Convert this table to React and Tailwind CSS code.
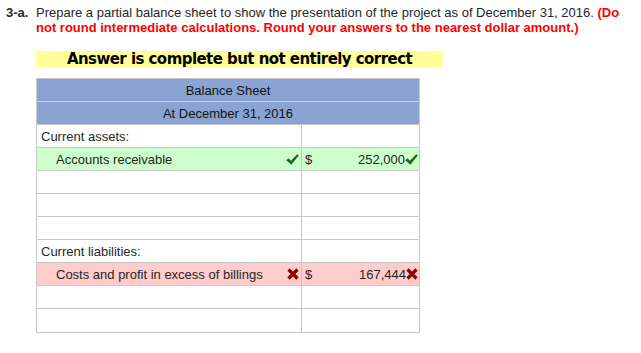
import React from "react";

const Check = () => (
  <svg width="13" height="11" viewBox="0 0 13 11" className="block shrink-0">
    <path d="M0.3 6.2 L2.6 4.2 L4.9 6.8 L11.2 0.2 L12.8 1.6 L5.3 10.8 Z" fill="#1d6b1d" />
  </svg>
);

const Cross = () => (
  <svg width="12" height="12" viewBox="0 0 12 12" className="block shrink-0">
    <path d="M1.5 1.5 L10.5 10.5 M10.5 1.5 L1.5 10.5" stroke="#8e0000" strokeWidth="3.2" strokeLinecap="butt" />
  </svg>
);

function Row({ bg = "", left = null, right = null, last = false }) {
  return (
    <div className={`flex h-[23px] box-border ${last ? "" : "border-b"} border-[#c8c8c8] ${bg}`}>
      <div className="w-[265px] box-border border-r border-[#c8c8c8] flex items-center">{left}</div>
      <div className="flex-1 flex items-center">{right}</div>
    </div>
  );
}

export default function App() {
  return (
    <div className="w-[641px] h-[353px] bg-white overflow-hidden text-[#262626] font-['Liberation_Sans',Arial,sans-serif] text-[13px] leading-[15px]">
      <div className="flex pt-[5px]">
        <div className="w-[36px] pl-[6px] font-bold shrink-0">3-a.</div>
        <p className="w-[590px]">
          Prepare a partial balance sheet to show the presentation of the project as of December 31, 2016.{" "}
          <span className="font-bold text-[#ff0000]">
            (Do not round intermediate calculations. Round your answers to the nearest dollar amount.)
          </span>
        </p>
      </div>

      <div className="ml-[36px] mt-[16px] w-[407px] h-[17px] bg-[#ffff99] text-center text-black font-bold font-['DejaVu_Sans',Verdana,sans-serif] text-[15px] leading-[17px] tracking-[-0.55px]">
        Answer is complete but not entirely correct
      </div>

      <div className="ml-[36px] mt-[10px] w-[384px] border border-[#c8c8c8]">
        <div className="h-[23px] box-border border-b border-[#c9d3e6] bg-[#89a4d3] text-[#111111] flex items-center justify-center">
          Balance Sheet
        </div>
        <div className="h-[23px] box-border border-b border-[#c8c8c8] bg-[#89a4d3] text-[#111111] flex items-center justify-center">
          At December 31, 2016
        </div>
        <Row left={<span className="pl-[4px]">Current assets:</span>} />
        <Row
          bg="bg-[#ccffcc]"
          left={
            <div className="flex items-center w-full pl-[19px] pr-[2px]">
              <span>Accounts receivable</span>
              <span className="ml-auto"><Check /></span>
            </div>
          }
          right={
            <div className="flex items-center w-full pl-[3px] pr-[1px]">
              <span>$</span>
              <span className="ml-auto">252,000</span>
              <Check />
            </div>
          }
        />
        <Row />
        <Row />
        <Row />
        <Row left={<span className="pl-[4px]">Current liabilities:</span>} />
        <Row
          bg="bg-[#ffcccc]"
          left={
            <div className="flex items-center w-full pl-[19px] pr-[2px]">
              <span>Costs and profit in excess of billings</span>
              <span className="ml-auto"><Cross /></span>
            </div>
          }
          right={
            <div className="flex items-center w-full pl-[3px] pr-[1px]">
              <span>$</span>
              <span className="ml-auto">167,444</span>
              <Cross />
            </div>
          }
        />
        <Row />
        <Row last />
      </div>
    </div>
  );
}
